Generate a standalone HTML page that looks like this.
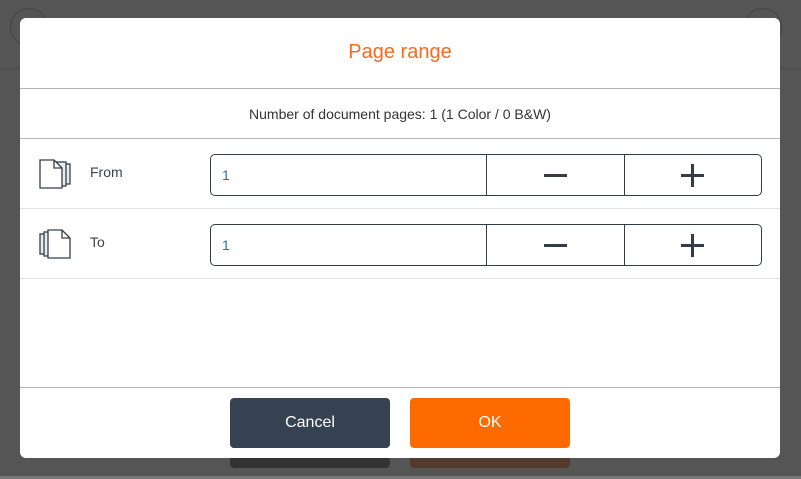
<html><head><style>
body{margin:0;width:801px;height:479px;background:#555;position:relative;overflow:hidden;font-family:"Liberation Sans",sans-serif}
.a{position:absolute}
</style></head><body>
<div class="a" style="left:10px;top:8px;width:36px;height:36px;border:1px solid #444;border-radius:50%"></div>
<div class="a" style="left:744px;top:8px;width:36px;height:36px;border:1px solid #444;border-radius:50%"></div>
<div class="a" style="left:0;top:68px;width:801px;height:1px;background:#4a4a4a"></div>
<div class="a" style="left:230px;top:456px;width:160px;height:12px;background:#333;border-radius:4px"></div>
<div class="a" style="left:410px;top:456px;width:160px;height:12px;background:#523a2e;border-radius:4px"></div>
<div class="a" style="left:0;top:476px;width:801px;height:3px;background:#777"></div>
<div class="a" style="left:20px;top:18px;width:760px;height:440px;background:#fff;border-radius:6px">
<div class="a" style="left:0;top:0;width:760px;height:70px;line-height:68px;text-align:center;color:#f96a1a;font-size:20px">Page range</div>
<div class="a" style="left:0;top:70px;width:760px;height:1px;background:#b5b5b5"></div>
<div class="a" style="left:0;top:71px;width:760px;height:49px;line-height:50px;text-align:center;color:#333;font-size:14px">Number of document pages: 1 (1 Color / 0 B&amp;W)</div>
<div class="a" style="left:0;top:120px;width:760px;height:1px;background:#b5b5b5"></div>
<div class="a" style="left:0;top:190px;width:760px;height:1px;background:#e2e2e2"></div>
<div class="a" style="left:0;top:260px;width:760px;height:1px;background:#e2e2e2"></div>
<div class="a" style="left:0;top:369px;width:760px;height:1px;background:#b5b5b5"></div>
<svg class="a" style="left:18px;top:140px" width="36" height="36" viewBox="0 0 36 36" fill="none" stroke="#333d4a" stroke-width="1.3">
<rect x="24" y="6" width="8" height="20" fill="#e8ecf0"/><rect x="19" y="4" width="9" height="24" fill="#e8ecf0"/>
<path d="M2 2H16L24 10V30H2Z" fill="#fff"/><path d="M16 2V10H24"/></svg>
<svg class="a" style="left:18px;top:210px" width="36" height="36" viewBox="0 0 36 36" fill="none" stroke="#333d4a" stroke-width="1.3">
<rect x="2" y="6" width="8" height="20" fill="#e8ecf0"/><rect x="6" y="4" width="8" height="24" fill="#e8ecf0"/>
<path d="M10 2H24L32 10V30H10Z" fill="#fff"/><path d="M24 2V10H32"/></svg>
<div class="a" style="left:70px;top:146px;font-size:14px;color:#3a4250">From</div>
<div class="a" style="left:70px;top:216px;font-size:14px;color:#3a4250">To</div>
<div class="a" style="left:190px;top:136px;width:550px;height:40px;border:1px solid #333d4a;border-radius:5px">
<div class="a" style="left:11px;top:12px;font-size:14px;color:#2c6fb0">1</div>
<div class="a" style="left:275px;top:0;width:1px;height:40px;background:#333d4a"></div>
<div class="a" style="left:413px;top:0;width:1px;height:40px;background:#333d4a"></div>
<div class="a" style="left:333px;top:19px;width:23px;height:2.5px;background:#333d4a"></div>
<div class="a" style="left:470px;top:19px;width:23px;height:2.5px;background:#333d4a"></div>
<div class="a" style="left:480px;top:9px;width:2.5px;height:23px;background:#333d4a"></div>
</div>
<div class="a" style="left:190px;top:206px;width:550px;height:40px;border:1px solid #333d4a;border-radius:5px">
<div class="a" style="left:11px;top:12px;font-size:14px;color:#2c6fb0">1</div>
<div class="a" style="left:275px;top:0;width:1px;height:40px;background:#333d4a"></div>
<div class="a" style="left:413px;top:0;width:1px;height:40px;background:#333d4a"></div>
<div class="a" style="left:333px;top:19px;width:23px;height:2.5px;background:#333d4a"></div>
<div class="a" style="left:470px;top:19px;width:23px;height:2.5px;background:#333d4a"></div>
<div class="a" style="left:480px;top:9px;width:2.5px;height:23px;background:#333d4a"></div>
</div>
<div class="a" style="left:210px;top:380px;width:160px;height:50px;background:#364152;border-radius:4px;color:#fff;font-size:16px;text-align:center;line-height:50px">Cancel</div>
<div class="a" style="left:390px;top:380px;width:160px;height:50px;background:#ff6a00;border-radius:4px;color:#fff;font-size:16px;text-align:center;line-height:50px">OK</div>
</div>
</body></html>
